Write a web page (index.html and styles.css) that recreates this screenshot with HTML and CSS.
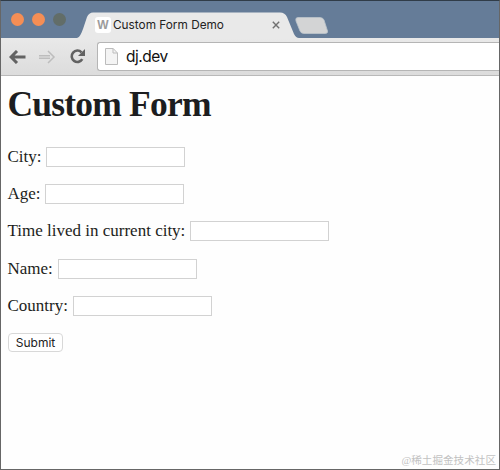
FILE: index.html
```html
<!DOCTYPE html>
<html lang="en">
<head>
<meta charset="utf-8">
<title>Custom Form Demo</title>
<link rel="stylesheet" href="styles.css">
</head>
<body>
<div class="window">
  <header class="tabbar">
    <div class="lights"><i></i><i></i><i class="dim"></i></div>
    <div class="tab">
      <svg class="tab-shape" width="222" height="27" viewBox="0 0 222 27"><path d="M0 26C3 25 4 22 6 17L10 5Q12 .5 16 .5H203Q208 .5 210 5L217 22Q219 26 222 26V27H0Z" fill="#e9e9e9"/></svg>
      <span class="favicon">W</span>
      <span class="tab-title">Custom Form Demo</span>
      <svg class="close" width="8" height="8" viewBox="0 0 8 8"><path d="M.8.8l6.4 6.4M7.2.8L.8 7.2" stroke="#707070" stroke-width="1.4"/></svg>
    </div>
    <svg class="new-tab" width="34" height="18" viewBox="0 0 34 18"><path d="M3 .5H25Q28 .5 29 3L32.500 14Q33 16.500 30 16.500H9Q6 16.500 5 14L1 4Q0 .5 3 .5Z" fill="#d3d4d5" stroke="#bdc5cb" stroke-width=".8"/></svg>
  </header>
  <nav class="toolbar">
    <svg class="back" width="17" height="14" viewBox="0 0 17 14"><path d="M8 1L2 7l6 6M2 7h14.500" fill="none" stroke="#626262" stroke-width="3"/></svg>
    <svg class="forward" width="17" height="14" viewBox="0 0 17 14"><path d="M9 1l6 6-6 6M0 5.700h11M0 8.300h11" fill="none" stroke="#bdbdbd" stroke-width="1.5"/></svg>
    <svg class="reload" width="16" height="15" viewBox="0 0 16 15"><path d="M12.300 10.200A5.700 5.700 0 1 1 11.500 3.300" fill="none" stroke="#626262" stroke-width="2.6"/><path d="M15 0v7H8Z" fill="#626262"/></svg>
    <div class="address">
      <svg width="13" height="17" viewBox="0 0 13 17"><path d="M.5.5h7.700L12.500 5v11.500H.5Z" fill="#f4f4f4" stroke="#bcbcbc"/><path d="M8 .5V5h4.500" fill="none" stroke="#bcbcbc"/></svg>
      <span>dj.dev</span>
    </div>
  </nav>
  <main>
    <h1>Custom Form</h1>
    <form>
      <label class="row">City: <input type="text"></label>
      <label class="row">Age: <input type="text"></label>
      <label class="row">Time lived in current city: <input type="text"></label>
      <label class="row wide">Name: <input type="text"></label>
      <label class="row wide">Country: <input type="text"></label>
      <button type="button">Submit</button>
    </form>
  </main>
  <div class="watermark">@稀土掘金技术社区</div>
</div>
</body>
</html>
```
FILE: styles.css
```css
* { box-sizing: border-box; }
body { margin: 0; background: #fff; }
.window {
  position: relative;
  width: 500px;
  height: 470px;
  overflow: hidden;
  border: 1px solid #666;
  border-top-color: #303c48;
  background: #fefefe;
}
.tabbar {
  display: flex;
  height: 37px;
  padding-left: 10px;
  background: #657c98;
}
.lights { display: flex; gap: 8px; width: 66px; padding-top: 12px; }
.lights i { width: 13px; height: 13px; border-radius: 50%; background: #f58e55; }
.lights .dim { background: #626d68; }
.tab {
  position: relative;
  display: flex;
  align-items: center;
  width: 222px;
  height: 27px;
  margin-top: 11px;
  padding-left: 18px;
}
.tab-shape { position: absolute; left: 0; top: 0; }
.favicon {
  position: relative;
  width: 16px;
  height: 16px;
  margin-top: -1px;
  border-radius: 3px;
  background: #fff;
  color: #9c9c9c;
  font: bold 12px/16px "Liberation Sans", sans-serif;
  text-align: center;
}
.tab-title {
  position: relative;
  width: 163px;
  margin: -1px 0 0 2px;
  color: #222;
  font: 11.8px/16px Inter, sans-serif;
  white-space: nowrap;
}
.close { position: relative; flex: none; margin-top: -1px; margin-left: -4px; }
.new-tab { margin: 16px 0 0 -4px; }
.toolbar {
  display: flex;
  align-items: center;
  height: 38px;
  padding-left: 8px;
  border-bottom: 1px solid #b9b9b9;
  background: linear-gradient(#e9e9e9, #dcdcdc);
}
.forward { margin-left: 13px; }
.reload { margin-left: 14px; }
.address {
  display: flex;
  flex: 1;
  align-items: center;
  height: 29px;
  margin-left: 11px;
  padding-left: 7px;
  border: 1px solid #b5b5b5;
  border-right: 0;
  border-radius: 3px 0 0 3px;
  background: #fff;
  color: #111;
  font: 15.5px/20px Inter, sans-serif;
  letter-spacing: -0.5px;
}
.address span { margin-left: 8px; }
main { padding: 8px 6.5px 0; color: #1c1d20; font: 17px/20px "Liberation Serif", serif; }
h1 { margin: 0 0 22px; font-size: 35.5px; line-height: 41px; letter-spacing: -0.8px; }
.row { display: flex; align-items: center; gap: 4.3px; height: 20px; margin-bottom: 17.2px; white-space: nowrap; }
.wide { gap: 5px; }
.row input { width: 139px; height: 20px; margin: 0; padding: 0; border: 1px solid #d2d2d2; background: #fff; }
button {
  display: block;
  width: 55px;
  height: 19px;
  margin-left: 0.5px;
  padding: 1px 0 0;
  border: 1px solid #d8d8d8;
  border-radius: 4px;
  background: #fff;
  color: #222;
  font: 12px/16px Inter, sans-serif;
}
.watermark {
  position: absolute;
  right: 3px;
  bottom: 0;
  color: #c2c2c2;
  font: 10.6px/16px "Liberation Serif", "Noto Sans CJK SC", serif;
  white-space: nowrap;
}
```
